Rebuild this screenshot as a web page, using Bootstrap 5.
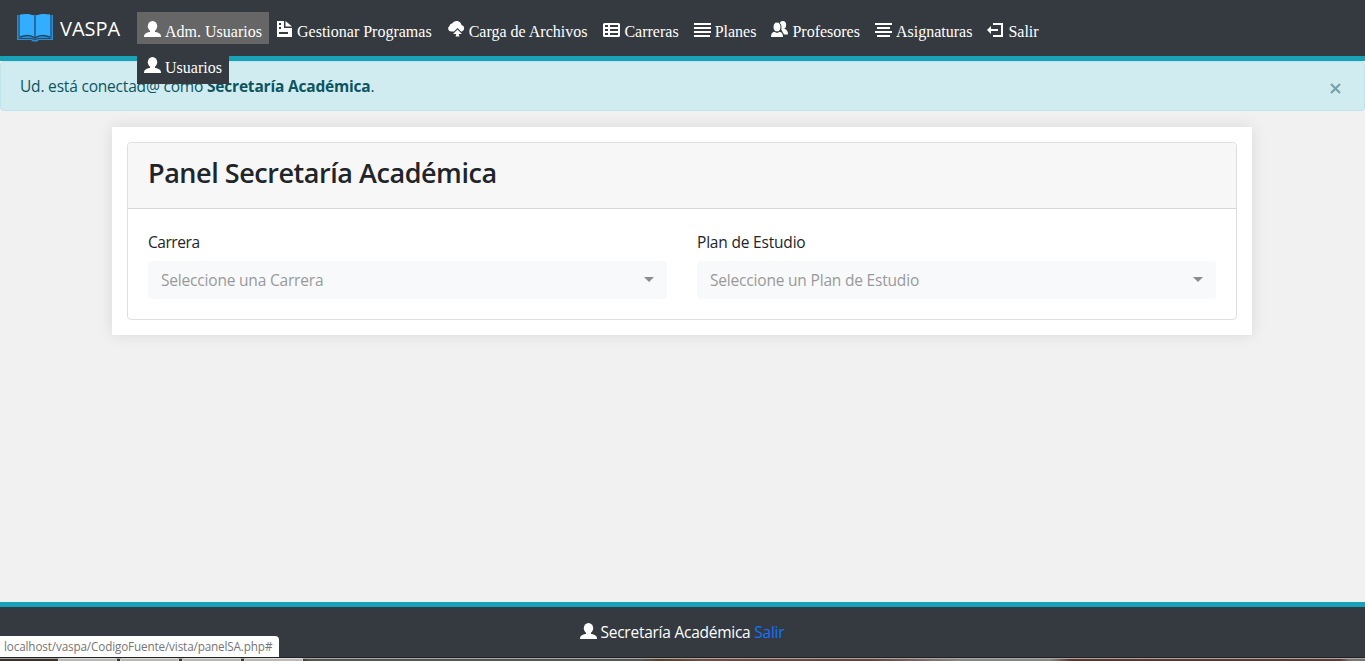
<!DOCTYPE html>
<html lang="es">
<head>
<meta charset="utf-8">
<meta name="viewport" content="width=device-width, initial-scale=1">
<title>VASPA - Panel Secretaría Académica</title>
<link rel="stylesheet" href="https://cdn.jsdelivr.net/npm/bootstrap@5.3.0/dist/css/bootstrap.min.css">
<style>
  html, body { height: 100%; overflow: hidden; }
  body { font: 16px/1.5 "Open Sans", "Noto Sans", sans-serif; background: #f1f1f1; color: #212529; }
  .ui { font-size: 15.5px; letter-spacing: -.19px; }
  .top-bar { height: 61px; background: #343a40; border-bottom: 5px solid #17a2b8; padding: 0 16px; }
  .navbar-brand { font-size: 20px; color: #fff !important; margin-right: 16px; padding: 0; width: 105px; height: 56px; }
  .brand-name { font-size: 20px; margin-left: 6px; padding-top: 2px; }
  .main-menu { font-family: "Liberation Serif", serif; margin-top: 12px; }
  .top-bar .main-menu .nav-link { color: #fff; padding: 8px 8px 0; height: 32px; line-height: 24px; white-space: nowrap; display: block; }
  .top-bar .main-menu .nav-link.active { background: #666; width: 132px; }
  .top-bar .main-menu .roomy { padding-right: 9px; }
  .ic { width: 17px; height: 17px; fill: #fff; margin-right: 3px; margin-left: -1px; vertical-align: -2px; flex: none; overflow: visible; }
  .main-menu .ic { margin-top: -3px; vertical-align: -1px; margin-right: 4px; }
  .sub-menu { top: 44px; left: 0; width: 92px; height: 28px; background: #343a40; color: #fff; line-height: 24px; padding: 0 8px; z-index: 5; white-space: nowrap; }
  .session-note { height: 50px; background: #d1ecf1; border: 1px solid #bee5eb; border-radius: 4px; color: #0c5460; padding: 0 22px 0 19px; margin: 0; }
  .session-note .ui { padding-top: 2px; }
  .panel-box { width: 1140px; margin: 16px 0 0 112px; padding: 15px; background: #fff; box-shadow: 0 0 15px rgba(0,0,0,.1); }
  .panel-card { border: 1px solid #dfdfdf; border-radius: 4px; height: 178px; }
  .panel-card .card-header { background: #f7f7f7; border-bottom: 1px solid #d8d8d8; height: 66px; padding: 11px 20px; }
  .panel-card h3 { font-size: 27px; line-height: 38px; font-weight: 600; letter-spacing: -.45px; margin: 0; }
  .panel-card .card-body { padding: 20px; }
  .panel-card .row { --bs-gutter-x: 30px; }
  .field-name { display: block; line-height: 24px; padding-top: 1px; margin-bottom: 7px; }
  .field-name.ui.short { letter-spacing: -.45px; }
  .picker { height: 38px; border-radius: 4px; background: #f8f9fa; color: #999; padding: 2px 13px 0; width: 100%; border: 0; }
  .picker::after { color: #8c8c8c; border-width: 5px; border-bottom: 0; margin: -4px 0 0; }
  .bottom-bar { height: 55px; border-top: 5px solid #17a2b8; background: #343a40; color: #fff; }
  .bottom-bar .ui { letter-spacing: -.25px; padding-top: 1px; }
  .bottom-bar .ic { margin-right: 0; }
  .bottom-bar a { color: #0f75ff; text-decoration: none; }
  .status-tip { position: absolute; left: 0; bottom: 4px; width: 279px; height: 21px; background: #fff; border-radius: 0 4px 0 0; color: #757575; font-size: 11.7px; letter-spacing: -.13px; line-height: 21px; padding-left: 4px; white-space: nowrap; }
  .os-strip { height: 4px; padding-left: 58px; border-top: 1px solid #202124; background: linear-gradient(#aaa69f 0 1px, transparent 1px), linear-gradient(90deg, #3b302b 0 300px, #555 310px 640px, #54402d 660px, #704d45 700px, #654540 870px, #888 960px 1050px, #5a3830 1070px, #5c3c37 1340px, #777 1350px); }
  .task { width: 59px; height: 3px; margin-right: 3px; background: #bbb8b4; border: 1px solid #ddd; border-bottom: 0; border-radius: 2px 2px 0 0; }
</style>
</head>
<body class="d-flex flex-column">
<svg class="d-none">
  <symbol id="person" viewBox="0 0 17 17"><ellipse cx="8.5" cy="5.3" rx="4.700" ry="5.3"/><path d="M6 9h5v2.500H6z"/><path d="M0 16c0-3 1.500-4.100 5.500-5h6C15.500 11.900 17 13 17 16z"/></symbol>
</svg>
<nav class="top-bar navbar-expand d-flex align-items-start flex-shrink-0">
  <a class="navbar-brand d-flex align-items-center flex-shrink-0" href="#">
    <svg width="38" height="30" viewBox="0 0 38 30" class="flex-shrink-0">
      <path d="M1 2h36v25H23l-2 1.500h-4L15 27H1z" fill="#2a8fd8"/>
      <path d="M3 2v23.500h12l4 1 4-1h12V2" fill="none" stroke="#244b68" stroke-width="1"/>
      <path d="M4 1.500C9 .5 15 .5 18.300 3v21C15 22 9 22 4 24zM34 1.500C29 .5 23 .5 19.700 3v21C23 22 29 22 34 24z" fill="#33aeff"/>
      <path d="M19 2.500v22" stroke="#245b82" stroke-width="1.400"/>
      <path d="M4 24c5-2 11-2 15 1 4-3 10-3 15-1" fill="none" stroke="#26465f" stroke-width="1.500"/>
    </svg>
    <span class="brand-name">VASPA</span>
  </a>
  <ul class="main-menu navbar-nav flex-row">
    <li class="nav-item position-relative"><a class="nav-link active" href="#"><svg class="ic"><use href="#person"/></svg>Adm. Usuarios</a>
      <div class="sub-menu position-absolute"><svg class="ic"><use href="#person"/></svg>Usuarios</div></li>
    <li class="nav-item"><a class="nav-link roomy" href="#"><svg class="ic" viewBox="0 0 17 17"><path fill-rule="evenodd" d="M1 0h7v7h8v9H1zM3 2v2h2V2zM3 6v2h2V6zM3 11v2h9v-2z"/><path d="M9.500 0 16 5.500H9.500z"/></svg>Gestionar Programas</a></li>
    <li class="nav-item"><a class="nav-link roomy" href="#"><svg class="ic" viewBox="0 0 17 17"><path d="M3.500 10.500A3 3 0 0 1 1.500 5 3 3 0 0 1 4 2.500a5.200 5.200 0 0 1 9.500 1.500A3.400 3.400 0 0 1 14 10.500h-1L9.500 7 6 10.500z"/><path d="m9.500 8.500 4.500 4.500h-3.300l.8 2.500h-4l.8-2.500H5z"/></svg>Carga de Archivos</a></li>
    <li class="nav-item"><a class="nav-link" href="#"><svg class="ic" viewBox="0 0 17 17"><path fill-rule="evenodd" d="M1.500 2h14q1.500 0 1.500 1.500v11q0 1.500-1.500 1.500h-14Q0 16 0 14.500v-11Q0 2 1.500 2zM2 4v2h3V4zm5 0v2h8V4zM2 8v2h3V8zm5 0v2h8V8zm-5 4v2h3v-2zm5 0v2h8v-2z"/></svg>Carreras</a></li>
    <li class="nav-item"><a class="nav-link" href="#"><svg class="ic" viewBox="0 0 17 17"><path d="M0 2h17v2H0zm0 4h17v2H0zm0 4h17v2H0zm0 4h16v2H0z"/></svg>Planes</a></li>
    <li class="nav-item"><a class="nav-link" href="#"><svg class="ic" viewBox="0 0 17 17"><ellipse cx="11.800" cy="4" rx="3.300" ry="4"/><path d="M10 8h4q3 1 3 5.500h-4z"/><ellipse cx="6" cy="6" rx="4" ry="5" stroke="#343a40"/><path d="M0 16q0-4.500 3-5.300l3 1.300 3-1.300q3 .8 3 5.300z"/></svg>Profesores</a></li>
    <li class="nav-item"><a class="nav-link" href="#"><svg class="ic" viewBox="0 0 17 17"><path d="M0 2h17v2H0zm2 4h13v2H2zm-2 4h17v2H0zm2 4h13v2H2z"/></svg>Asignaturas</a></li>
    <li class="nav-item"><a class="nav-link" href="#"><svg class="ic" viewBox="0 0 17 17"><path d="M6 2h10v14H6v-2h8V4H6z"/><path d="m0 9 4-4v3h7v2H4v3z"/></svg>Salir</a></li>
  </ul>
</nav>
<div class="session-note d-flex justify-content-between align-items-center flex-shrink-0">
  <span class="ui">Ud. está conectad@ como <strong>Secretaría Académica</strong>.</span>
  <svg width="13" height="13" viewBox="0 0 13 13" style="margin-top:5px"><path d="m2 2 9 9m0-9-9 9" stroke="#76a3aa" stroke-width="2.300"/></svg>
</div>
<main class="flex-grow-1">
  <div class="panel-box">
    <div class="card panel-card">
      <div class="card-header"><h3>Panel Secretaría Académica</h3></div>
      <div class="card-body">
        <div class="row">
          <div class="col-6"><label class="field-name ui short">Carrera</label><button class="picker ui dropdown-toggle d-flex align-items-center justify-content-between">Seleccione una Carrera</button></div>
          <div class="col-6"><label class="field-name ui">Plan de Estudio</label><button class="picker ui dropdown-toggle d-flex align-items-center justify-content-between">Seleccione un Plan de Estudio</button></div>
        </div>
      </div>
    </div>
  </div>
</main>
<footer class="bottom-bar d-flex justify-content-center align-items-center flex-shrink-0">
  <div class="ui"><svg class="ic"><use href="#person"/></svg> <span>Secretaría Académica</span> <a href="#">Salir</a></div>
</footer>
<div class="os-strip d-flex flex-shrink-0"><i class="task"></i><i class="task"></i><i class="task"></i><i class="task"></i></div>
<div class="status-tip">localhost/vaspa/CodigoFuente/vista/panelSA.php#</div>
<script src="https://cdn.jsdelivr.net/npm/bootstrap@5.3.0/dist/js/bootstrap.bundle.min.js"></script>
</body>
</html>
